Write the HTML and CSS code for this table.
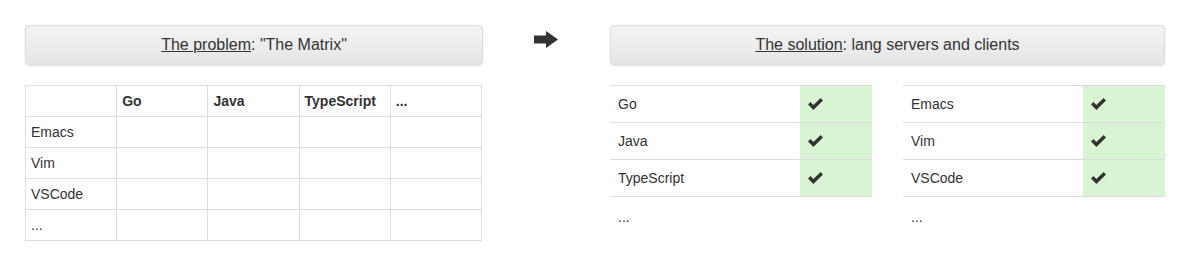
FILE: index.html
```html
<!DOCTYPE html>
<html lang="en">
<head>
    <meta charset="UTF-8">
    <title>The Matrix</title>
    <link rel="stylesheet" href="styles.css">
</head>
<body>
    <div class="page">
        <div class="col-problem">
            <div class="banner"><u>The problem</u>: "The Matrix"</div>
            <table class="matrix">
                <tr><th></th><th>Go</th><th>Java</th><th>TypeScript</th><th>...</th></tr>
                <tr><td>Emacs</td><td></td><td></td><td></td><td></td></tr>
                <tr><td>Vim</td><td></td><td></td><td></td><td></td></tr>
                <tr><td>VSCode</td><td></td><td></td><td></td><td></td></tr>
                <tr><td>...</td><td></td><td></td><td></td><td></td></tr>
            </table>
        </div>

        <div class="col-arrow">
            <svg class="arrow" width="24" height="17" viewBox="0 0 24 17">
                <path d="M0 4.5h12V0l12 8.5-12 8.5v-4.5H0z" fill="#333"/>
            </svg>
        </div>

        <div class="col-solution">
            <div class="banner"><u>The solution</u>: lang servers and clients</div>
            <div class="lists">
                <table class="list">
                    <tr><td>Go</td><td class="ok"><svg width="15" height="12" viewBox="0 0 15 12"><path d="M0 6.5l2.4-2.4 3 3L12.6 0 15 2.4 5.4 12z" fill="#333"/></svg></td></tr>
                    <tr><td>Java</td><td class="ok"><svg width="15" height="12" viewBox="0 0 15 12"><path d="M0 6.5l2.4-2.4 3 3L12.6 0 15 2.4 5.4 12z" fill="#333"/></svg></td></tr>
                    <tr><td>TypeScript</td><td class="ok"><svg width="15" height="12" viewBox="0 0 15 12"><path d="M0 6.5l2.4-2.4 3 3L12.6 0 15 2.4 5.4 12z" fill="#333"/></svg></td></tr>
                    <tr class="more"><td>...</td><td></td></tr>
                </table>
                <table class="list wide-ok">
                    <tr><td>Emacs</td><td class="ok"><svg width="15" height="12" viewBox="0 0 15 12"><path d="M0 6.5l2.4-2.4 3 3L12.6 0 15 2.4 5.4 12z" fill="#333"/></svg></td></tr>
                    <tr><td>Vim</td><td class="ok"><svg width="15" height="12" viewBox="0 0 15 12"><path d="M0 6.5l2.4-2.4 3 3L12.6 0 15 2.4 5.4 12z" fill="#333"/></svg></td></tr>
                    <tr><td>VSCode</td><td class="ok"><svg width="15" height="12" viewBox="0 0 15 12"><path d="M0 6.5l2.4-2.4 3 3L12.6 0 15 2.4 5.4 12z" fill="#333"/></svg></td></tr>
                    <tr class="more"><td>...</td><td></td></tr>
                </table>
            </div>
        </div>
    </div>
</body>
</html>
```

FILE: styles.css
```css
:root {
    --text-color: #333;
    --border-color: #ddd;
    --ok-color: #d8f4d3;
}

* {
    margin: 0;
    padding: 0;
    box-sizing: border-box;
}

body {
    font-family: 'Liberation Sans', Arial, sans-serif;
    font-size: 14px;
    line-height: 20px;
    color: var(--text-color);
    background: white;
}

.page {
    display: flex;
    padding: 25px 0 0 25px;
}

.col-problem {
    width: 458px;
}

.col-arrow {
    width: 127px;
    display: flex;
    justify-content: center;
    padding-top: 6px;
}

.arrow {
    display: block;
    margin-left: -2px;
}

.col-solution {
    width: 555px;
}

.banner {
    height: 40px;
    padding: 9px 10px;
    font-size: 16px;
    text-align: center;
    border: 1px solid #dcdcdc;
    border-radius: 4px;
    background: linear-gradient(to bottom, #f4f4f4, #e5e5e5);
    box-shadow: 0 1px 2px rgba(0, 0, 0, 0.12);
    margin-bottom: 20px;
}

.banner u {
    text-underline-offset: 1px;
}

table {
    border-collapse: collapse;
    border-spacing: 0;
}

.matrix {
    width: 457px;
    table-layout: fixed;
    border: 1px solid var(--border-color);
}

.matrix th,
.matrix td {
    border: 1px solid var(--border-color);
    padding: 5px;
    height: 31px;
    text-align: left;
    vertical-align: top;
}

.matrix th {
    font-weight: bold;
}

.lists {
    display: flex;
    gap: 31px;
}

.list {
    width: 262px;
    table-layout: fixed;
}

.list td {
    border-top: 1px solid var(--border-color);
    padding: 8px;
    height: 37px;
    vertical-align: top;
}

.list td.ok {
    width: 72px;
    background: var(--ok-color);
    padding-top: 12px;
}

.list.wide-ok td.ok {
    width: 82px;
}

.list td.ok svg {
    display: block;
}

.list tr.more td {
    padding-top: 10px;
}
```
